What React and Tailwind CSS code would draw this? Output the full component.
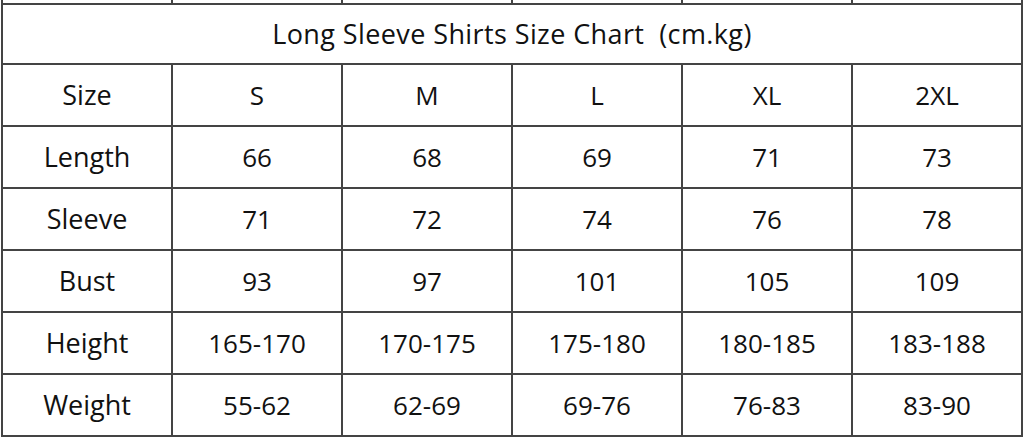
import React from "react";

const cols = ["Size", "S", "M", "L", "XL", "2XL"];
const rows = [
  ["Length", "66", "68", "69", "71", "73"],
  ["Sleeve", "71", "72", "74", "76", "78"],
  ["Bust", "93", "97", "101", "105", "109"],
  ["Height", "165-170", "170-175", "175-180", "180-185", "183-188"],
  ["Weight", "55-62", "62-69", "69-76", "76-83", "83-90"],
];

function Row({ cells }) {
  return (
    <div className="grid grid-cols-[repeat(6,170px)] h-[62px]">
      {cells.map((c, i) => (
        <div
          key={i}
          className={
            "flex items-center justify-center border-r-2 border-b-2 border-[#444] text-[#111] " +
            (i === 0 ? "text-[27px]" : "text-[26px]")
          }
        >
          {c}
        </div>
      ))}
    </div>
  );
}

export default function App() {
  return (
    <div
      className="w-[1024px] h-[439px] bg-white overflow-hidden"
      style={{ fontFamily: '"Open Sans", "Noto Sans", sans-serif' }}
    >
      <div className="ml-[1px] w-[1022px] border-l-2 border-[#444]">
        <div className="grid grid-cols-[repeat(6,170px)] h-[5px]">
          {cols.map((_, i) => (
            <div key={i} className="border-r-2 border-b-2 border-[#444]" />
          ))}
        </div>
        <div className="h-[60px] flex items-center justify-center border-r-2 border-b-2 border-[#444] text-[27px] tracking-[0.4px] text-[#111] whitespace-pre">
          {"Long Sleeve Shirts Size Chart  (cm.kg)"}
        </div>
        <Row cells={cols} />
        {rows.map((r, i) => (
          <Row key={i} cells={r} />
        ))}
      </div>
    </div>
  );
}
